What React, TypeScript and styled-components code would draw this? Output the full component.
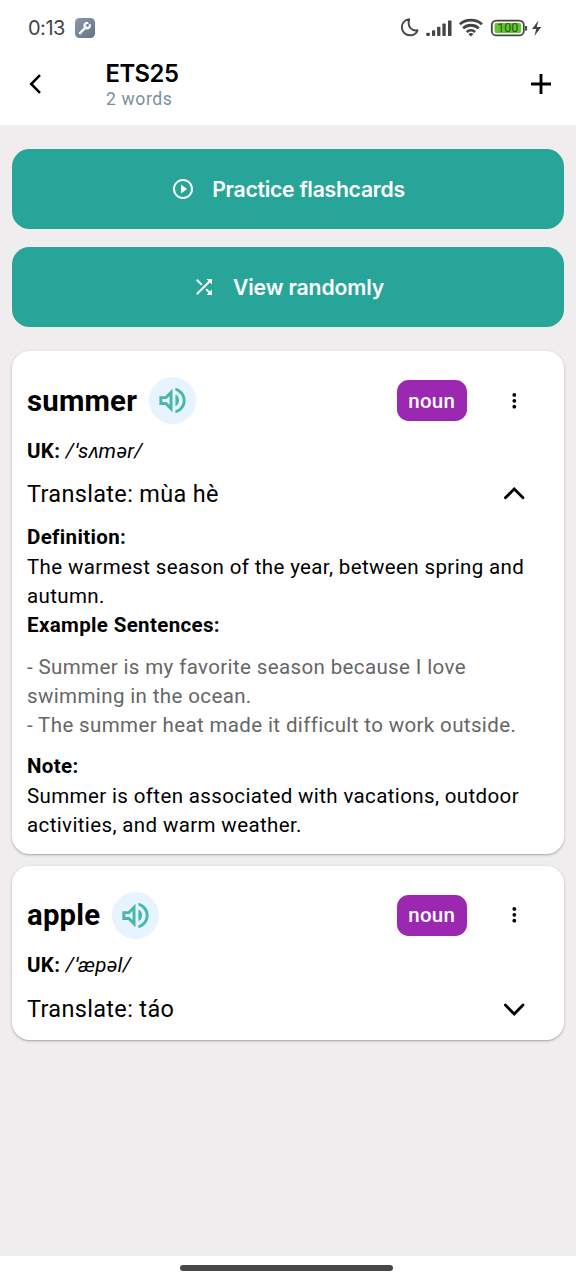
import React, { useState } from "react";
import styled, { createGlobalStyle } from "styled-components";
import { MdOutlineVolumeUp, MdPlayCircleOutline, MdShuffle } from "react-icons/md";

const GlobalStyle = createGlobalStyle`
  * { box-sizing: border-box; }
  body { margin: 0; background: #efedee; }
  button { border: 0; margin: 0; padding: 0; background: none; font: inherit; color: inherit; cursor: pointer; }
  svg { display: block; flex: none; }
`;

const Screen = styled.div`
  width: 576px;
  height: 1280px;
  display: flex;
  flex-direction: column;
  overflow: hidden;
  background: #efedee;
  color: #000;
  font-family: Roboto, "Noto Sans", sans-serif;
`;

const StatusBar = styled.div`
  height: 56px;
  flex: none;
  padding: 0 32px 0 28px;
  display: flex;
  align-items: center;
  justify-content: space-between;
  background: #fff;
`;

const StatusGroup = styled.div<{ $gap: number }>`
  display: flex;
  align-items: center;
  gap: ${(p) => p.$gap}px;
`;

const Clock = styled.span`
  width: 38px;
  font: 400 20px/28px Inter, sans-serif;
  letter-spacing: -0.5px;
  white-space: nowrap;
  color: #444;
`;

const AppBar = styled.header`
  height: 69px;
  flex: none;
  padding: 0 20px 13px 28px;
  display: flex;
  align-items: center;
  background: #fff;
`;

const TitleBlock = styled.div`
  flex: 1;
  margin-left: 62px;
  padding-top: 1px;
`;

const Title = styled.h1`
  margin: 0 0 0 -0.5px;
  font: 600 23.8px/29px Inter, sans-serif;
  letter-spacing: -0.5px;
`;

const Subtitle = styled.div`
  font-size: 17.6px;
  line-height: 23px;
  letter-spacing: 0.6px;
  color: #78909c;
`;

const Content = styled.main`
  flex: 1;
  padding: 23.5px 12px 0;
`;

const Actions = styled.div`
  display: flex;
  flex-direction: column;
  gap: 17.5px;
  margin-bottom: 24px;
`;

const ActionButton = styled.button`
  height: 80.5px;
  width: 100%;
  display: flex;
  align-items: center;
  justify-content: center;
  gap: 17px;
  border-radius: 17.5px;
  background: #27a599;
  color: #fff;
`;

const ActionLabel = styled.span<{ $spacing: number }>`
  font: 600 21.2px/30px Inter, sans-serif;
  letter-spacing: ${(p) => p.$spacing}px;
`;

const WordCard = styled.article<{ $open: boolean }>`
  margin-bottom: 12px;
  padding: 26px 15px ${(p) => (p.$open ? 13.6 : 3)}px;
  border-radius: 17.5px;
  background: #fff;
  box-shadow: 0 1px 3px rgba(0, 0, 0, 0.24), 0 1px 1px rgba(0, 0, 0, 0.1);
`;

const WordRow = styled.div`
  display: flex;
  align-items: center;
  height: 47px;
`;

const Word = styled.h2`
  margin: 0;
  font-size: 29.33px;
  line-height: 36px;
  font-weight: 700;
  letter-spacing: 0.2px;
`;

const SpeakButton = styled.button`
  width: 47px;
  height: 47px;
  margin-left: 12px;
  display: grid;
  place-items: center;
  border-radius: 50%;
  background: #e7f3fe;
  color: #46b8a6;
`;

const PartOfSpeech = styled.span`
  width: 70.5px;
  height: 41px;
  margin-left: auto;
  display: grid;
  place-items: center;
  border-radius: 11.7px;
  background: #9c27b0;
  color: #fff;
  font-size: 20.5px;
  font-weight: 500;
  letter-spacing: 0.3px;
`;

const IconButton = styled.button`
  width: 70px;
  margin: 0 0 0 12px;
  display: grid;
  place-items: center;
`;

const Pronunciation = styled.div`
  margin-top: 12.5px;
  font-size: 20.53px;
  line-height: 29.33px;
  letter-spacing: 0.35px;
  white-space: pre;
`;

const TranslateRow = styled.div`
  height: 56.5px;
  display: flex;
  align-items: center;
  justify-content: space-between;
  font-size: 23.46px;
  letter-spacing: 0.35px;
`;

const Details = styled.div`
  padding-top: 1px;
  font-size: 20.53px;
  line-height: 29.33px;
  letter-spacing: 0.37px;
`;

const Heading = styled.h3`
  margin: 0;
  font: inherit;
  font-weight: 700;
  letter-spacing: 0.35px;
`;

const Paragraph = styled.p`
  margin: 0;
`;

const Examples = styled.div`
  margin: 12px 0 11.7px;
  color: #666;
`;

const NavigationBar = styled.footer`
  height: 24px;
  flex: none;
  padding-right: 3px;
  display: grid;
  place-items: center;
  background: #fff;
`;

const HomeIndicator = styled.div`
  width: 213px;
  height: 6px;
  border-radius: 3px;
  background: #484848;
`;

const WrenchBadge = () => (
  <svg width="20" height="20" viewBox="0 0 20 20">
    <defs>
      <linearGradient id="badge" x2="1" y2="1">
        <stop stopColor="#8a9aaa" />
        <stop offset="1" stopColor="#637284" />
      </linearGradient>
    </defs>
    <rect width="20" height="20" rx="4.5" fill="url(#badge)" />
    <path d="M5 15.2 11 9" stroke="#fff" strokeWidth="2.5" strokeLinecap="round" />
    <path d="M14.8 7.2A2.7 2.7 0 1 1 12.5 5" stroke="#fff" strokeWidth="2.2" fill="none" strokeLinecap="round" />
  </svg>
);

const StatusIcons = () => (
  <svg width="144" height="22" viewBox="0 0 144 22">
    <path d="M9.2 2.2C4.8 2.8 1.9 6 1.9 10.2c0 4.7 3.6 8.1 8.1 8.1 3.7 0 6.6-2 7.6-5.1-5.7 1.3-10.6-3.5-8.4-11Z" fill="none" stroke="#444" strokeWidth="1.9" strokeLinejoin="round" />
    <g fill="#444">
      <rect x="26.3" y="15.8" width="3.5" height="3.2" rx=".8" />
      <rect x="32" y="13.2" width="3.2" height="5.8" rx=".7" />
      <rect x="37.1" y="9.8" width="3.3" height="9.2" rx=".7" />
      <rect x="42.4" y="6.6" width="3.3" height="12.4" rx=".7" />
      <rect x="48" y="3.5" width="3.5" height="15.5" rx=".7" />
    </g>
    <g fill="none" stroke="#444" strokeWidth="2.8">
      <path d="M59.9 7.2c6.1-5.5 15.9-5.5 22 0" />
      <path d="M63.1 11.3c4.4-4.1 11.2-4.1 15.6 0" />
      <path d="M66.7 15c2.5-2.3 5.9-2.3 8.4 0" />
    </g>
    <path d="M68.3 17q2.6-2 5.2 0l-2.6 2.5Z" fill="#444" />
    <rect x="91.8" y="3.6" width="32" height="14.8" rx="4.5" fill="#fff" stroke="#444" strokeWidth="1.8" />
    <rect x="94.5" y="6.1" width="26.7" height="9.8" rx="2" fill="#65c52f" />
    <text x="107.8" y="15.4" fill="#245817" fontFamily="Roboto, sans-serif" fontSize="12.5" textAnchor="middle">100</text>
    <path d="M126.1 9v4.6" stroke="#444" strokeWidth="2" />
    <path d="M138.4 3.5 132 12h4.2l-1.8 7 6.9-9h-4.5Z" fill="#444" />
  </svg>
);

const BackIcon = () => (
  <svg width="16" height="20" viewBox="0 0 16 20">
    <path d="M12 1.2 3.2 10l8.8 8.8" fill="none" stroke="#000" strokeWidth="2.5" />
  </svg>
);

const PlusIcon = () => (
  <svg width="30" height="30" viewBox="0 0 30 30">
    <path d="M15 5v20M5 15h20" stroke="#000" strokeWidth="2.9" />
  </svg>
);

const MoreIcon = () => (
  <svg width="6" height="18" viewBox="0 0 6 18">
    <circle cx="3.3" cy="2.9" r="1.9" />
    <circle cx="3.3" cy="8.8" r="1.9" />
    <circle cx="3.3" cy="14.7" r="1.9" />
  </svg>
);

const Chevron = ({ up }: { up: boolean }) => (
  <svg width="24" height="24" viewBox="0 0 24 24">
    <path d={up ? "m3.4 15.8 8.8-8.9 8.8 8.9" : "m3.4 8.1 8.8 8.9 8.8-8.9"} fill="none" stroke="#000" strokeWidth="2.8" strokeLinecap="round" strokeLinejoin="miter" />
  </svg>
);

interface Entry {
  word: string;
  phonetic: string;
  translation: string;
  details?: { definition: string; examples: string[]; note: string };
}

const entries: Entry[] = [
  {
    word: "summer",
    phonetic: "/ˈsʌmər/",
    translation: "mùa hè",
    details: {
      definition: "The warmest season of the year, between spring and autumn.",
      examples: [
        "Summer is my favorite season because I love swimming in the ocean.",
        "The summer heat made it difficult to work outside.",
      ],
      note: "Summer is often associated with vacations, outdoor activities, and warm weather.",
    },
  },
  { word: "apple", phonetic: "/ˈæpəl/", translation: "táo" },
];

function VocabularyCard({ entry }: { entry: Entry }) {
  const [open, setOpen] = useState(Boolean(entry.details));
  return (
    <WordCard $open={open}>
      <WordRow>
        <Word>{entry.word}</Word>
        <SpeakButton aria-label="Listen"><MdOutlineVolumeUp size={35} /></SpeakButton>
        <PartOfSpeech>noun</PartOfSpeech>
        <IconButton aria-label="More"><MoreIcon /></IconButton>
      </WordRow>
      <Pronunciation><b>UK:</b> <em>{entry.phonetic}</em></Pronunciation>
      <TranslateRow>
        <span>{`Translate: ${entry.translation}`}</span>
        <IconButton aria-label="Toggle details" onClick={() => setOpen(!open)}><Chevron up={open} /></IconButton>
      </TranslateRow>
      {open && entry.details && (
        <Details>
          <Heading>Definition:</Heading>
          <Paragraph>{entry.details.definition}</Paragraph>
          <Heading>Example Sentences:</Heading>
          <Examples>
            {entry.details.examples.map((e) => <Paragraph key={e}>{`- ${e}`}</Paragraph>)}
          </Examples>
          <Heading>Note:</Heading>
          <Paragraph>{entry.details.note}</Paragraph>
        </Details>
      )}
    </WordCard>
  );
}

export default function App() {
  return (
    <Screen>
      <GlobalStyle />
      <StatusBar>
        <StatusGroup $gap={9}><Clock>0:13</Clock><WrenchBadge /></StatusGroup>
        <StatusIcons />
      </StatusBar>
      <AppBar>
        <button aria-label="Back"><BackIcon /></button>
        <TitleBlock>
          <Title>ETS25</Title>
          <Subtitle>2 words</Subtitle>
        </TitleBlock>
        <button aria-label="Add word"><PlusIcon /></button>
      </AppBar>
      <Content>
        <Actions>
          <ActionButton><MdPlayCircleOutline size={24} /><ActionLabel $spacing={-0.27}>Practice flashcards</ActionLabel></ActionButton>
          <ActionButton><MdShuffle size={24} /><ActionLabel $spacing={-0.15}>View randomly</ActionLabel></ActionButton>
        </Actions>
        {entries.map((entry) => <VocabularyCard key={entry.word} entry={entry} />)}
      </Content>
      <NavigationBar><HomeIndicator /></NavigationBar>
    </Screen>
  );
}
